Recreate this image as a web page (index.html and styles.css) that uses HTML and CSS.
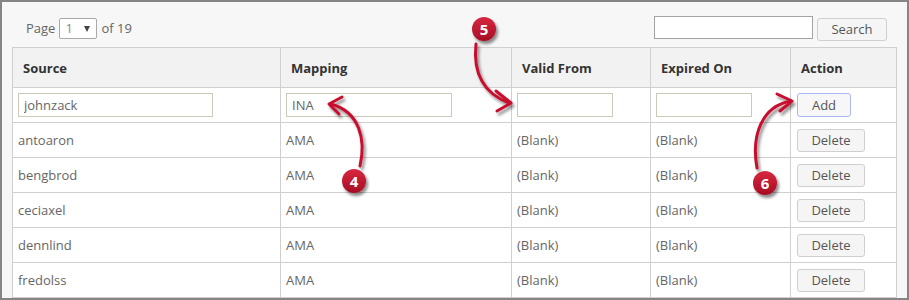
FILE: index.html
```html
<!DOCTYPE html>
<html>
<head>
<meta charset="utf-8">
<link rel="stylesheet" href="styles.css">
</head>
<body>
<div class="frame">
  <div class="toolbar">
    <div class="pager">
      <span>Page</span>
      <span class="select"><span class="sel-val">1</span><span class="caret"></span></span>
      <span>of 19</span>
    </div>
    <div class="search">
      <input class="search-input" type="text">
      <button class="btn search-btn">Search</button>
    </div>
  </div>
  <div class="grid">
    <div class="th">Source</div>
    <div class="th">Mapping</div>
    <div class="th">Valid From</div>
    <div class="th">Expired On</div>
    <div class="th">Action</div>

    <div class="td"><input class="inp w1" type="text" value="johnzack"></div>
    <div class="td"><input class="inp w2" type="text" value="INA"></div>
    <div class="td"><input class="inp w3" type="text"></div>
    <div class="td"><input class="inp w3" type="text"></div>
    <div class="td act"><button class="btn add-btn">Add</button></div>

    <div class="td">antoaron</div><div class="td">AMA</div><div class="td">(Blank)</div><div class="td">(Blank)</div><div class="td act"><button class="btn del-btn">Delete</button></div>
    <div class="td">bengbrod</div><div class="td">AMA</div><div class="td">(Blank)</div><div class="td">(Blank)</div><div class="td act"><button class="btn del-btn">Delete</button></div>
    <div class="td">ceciaxel</div><div class="td">AMA</div><div class="td">(Blank)</div><div class="td">(Blank)</div><div class="td act"><button class="btn del-btn">Delete</button></div>
    <div class="td">dennlind</div><div class="td">AMA</div><div class="td">(Blank)</div><div class="td">(Blank)</div><div class="td act"><button class="btn del-btn">Delete</button></div>
    <div class="td">fredolss</div><div class="td">AMA</div><div class="td">(Blank)</div><div class="td">(Blank)</div><div class="td act"><button class="btn del-btn">Delete</button></div>
  </div>

  <svg class="annot" width="909" height="300" viewBox="0 0 909 300" xmlns="http://www.w3.org/2000/svg">
    <defs>
      <linearGradient id="mk" x1="0" y1="0" x2="0" y2="1">
        <stop offset="0" stop-color="#d8283f"/>
        <stop offset="1" stop-color="#a50d24"/>
      </linearGradient>
      <filter id="sh" x="-50%" y="-50%" width="200%" height="200%">
        <feDropShadow dx="2" dy="3" stdDeviation="1.6" flood-color="#000" flood-opacity="0.45"/>
      </filter>
    </defs>
    <g filter="url(#sh)" fill="none" stroke="#c8102e" stroke-width="3" stroke-linecap="round" stroke-linejoin="round">
      <path d="M476,44 C473,72 483,93 509,103"/>
      <polyline points="496,91 511,103 497,111"/>
      <path d="M360,166 C366,140 360,112 331,104"/>
      <polyline points="342,97 329,104 339,114"/>
      <path d="M757,168 C751,135 762,106 791,101"/>
      <polyline points="777,94 792,101 780,111"/>
    </g>
    <g filter="url(#sh)">
      <circle cx="484" cy="29" r="12" fill="url(#mk)"/>
      <circle cx="354" cy="181" r="12" fill="url(#mk)"/>
      <circle cx="765" cy="183" r="12" fill="url(#mk)"/>
    </g>
    <g class="mknum" fill="#fff" text-anchor="middle">
      <text x="484" y="34.5">5</text>
      <text x="354" y="186.5">4</text>
      <text x="765" y="188.5">6</text>
    </g>
  </svg>
</div>
</body>
</html>
```
FILE: styles.css
```css
* { box-sizing: border-box; }
html, body { margin: 0; padding: 0; background: #f7f7f7; }
body { font-family: "Open Sans", "DejaVu Sans", sans-serif; font-size: 13px; color: #666; }

.frame {
  position: relative;
  width: 909px;
  height: 300px;
  border: 2px solid #858585;
  background: #f7f7f7;
  padding: 14px 10px 0 10px;
  overflow: hidden;
}

.toolbar {
  height: 24px;
  display: flex;
  align-items: center;
  justify-content: space-between;
  padding: 0 10px 0 14px;
  margin-bottom: 7px;
}
.pager { display: flex; align-items: center; gap: 4px; color: #666; }
.select {
  position: relative;
  width: 38px;
  height: 21px;
  border: 1px solid #a9a9a9;
  border-radius: 2px;
  background: #fff;
  display: flex;
  align-items: center;
  padding-left: 5px;
  color: #8a8a8a;
}
.caret {
  position: absolute;
  right: 6px;
  top: 7px;
  width: 0; height: 0;
  border-left: 3.5px solid transparent;
  border-right: 3.5px solid transparent;
  border-top: 6px solid #444;
}
.search { display: flex; align-items: center; gap: 4px; }
.search-input {
  width: 159px;
  height: 23px;
  border: 1px solid #a3a3a3;
  background: #fff;
  margin-top: -1px;
}
.btn {
  font-family: "Open Sans", "DejaVu Sans", sans-serif;
  font-size: 13px;
  color: #555;
  background: #f5f5f5;
  border: 1px solid #cfcfcf;
  border-radius: 3px;
  padding: 0;
}
.search-btn { width: 70px; height: 23px; margin-top: 2px; }

.grid {
  display: grid;
  grid-template-columns: 268px 231px 139px 140px 106px;
  grid-auto-rows: 35px;
  grid-template-rows: 40px;
  width: 885px;
  border-left: 1px solid #cfcfcf;
  border-top: 1px solid #cfcfcf;
  background: #fff;
}
.th, .td {
  border-right: 1px solid #d0d0d0;
  border-bottom: 1px solid #d0d0d0;
  display: flex;
  align-items: center;
  white-space: nowrap;
}
.th {
  background: #f2f2f2;
  font-weight: 700;
  color: #333;
  padding: 0 10px;
}
.td { padding: 0 5px; color: #666; }
.td.act { padding-left: 6px; }

.inp {
  height: 24px;
  border: 1px solid #cdc9b9;
  background: #fff;
  font-family: "Open Sans", "DejaVu Sans", sans-serif;
  font-size: 13px;
  color: #666;
  padding: 0 5px;
  outline: none;
}
.w1 { width: 195px; }
.w2 { width: 166px; }
.w3 { width: 96px; }

.add-btn { width: 54px; height: 24px; border-color: #a9b8f2; background: #f7f7f7; }
.del-btn { width: 68px; height: 23px; }

.annot { position: absolute; left: -2px; top: -2px; pointer-events: none; }
.mknum { font-family: "Open Sans", "DejaVu Sans", sans-serif; font-weight: 700; font-size: 15px; }
```
